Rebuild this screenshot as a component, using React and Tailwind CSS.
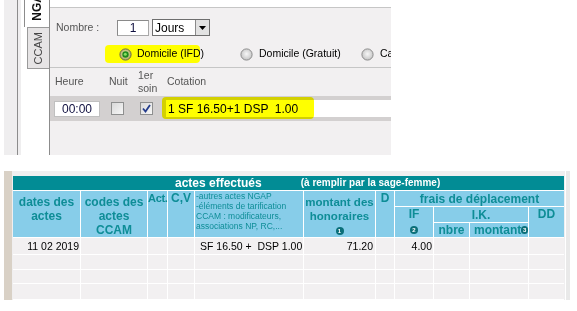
import React from "react";

function Radio({ checked, id }) {
  return (
    <svg width="13" height="13" viewBox="0 0 13 13" className="shrink-0 relative">
      <defs>
        <radialGradient id={id} cx="50%" cy="45%" r="55%">
          <stop offset="0%" stopColor={checked ? "#f0f0b0" : "#f7f7f7"} />
          <stop offset="100%" stopColor={checked ? "#a8a860" : "#c4c4c4"} />
        </radialGradient>
      </defs>
      <circle cx="6.5" cy="6.5" r="5.6" fill={`url(#${id})`} stroke={checked ? "#6b6b45" : "#8c8c8c"} strokeWidth="1" />
      {checked && (
        <>
          <circle cx="6.5" cy="6.5" r="3.2" fill="#1e8a1c" />
          <circle cx="6.3" cy="6.2" r="1.5" fill="#86e060" />
        </>
      )}
    </svg>
  );
}

function Check({ checked }) {
  return (
    <div className="w-[13px] h-[13px] border border-[#8e8f8f] bg-gradient-to-br from-[#d9d9d9] to-[#f7f7f7] flex items-center justify-center shrink-0">
      {checked && (
        <svg width="9" height="9" viewBox="0 0 9 9">
          <path d="M1 4.5 L3.5 7.5 L8 1" fill="none" stroke="#243c8c" strokeWidth="1.8" />
        </svg>
      )}
    </div>
  );
}

function Num({ n }) {
  return (
    <span className="inline-flex items-center justify-center w-[8px] h-[8px] rounded-full bg-[#0b6f79] text-white text-[6px] font-bold leading-none align-middle">
      {n}
    </span>
  );
}

function Top() {
  return (
    <div className="flex h-[155px] w-[391px] overflow-hidden">
      <div className="w-[4px] bg-white shrink-0" />
      <div className="w-[13px] bg-[#efeeef] shrink-0" />
      <div className="w-[1px] bg-[#8c8c8c] shrink-0" />
      <div className="w-[3px] bg-[#efeeef] shrink-0" />
      <div className="w-[3px] bg-white shrink-0" />
      <div className="w-[25px] flex flex-col bg-white shrink-0">
        <div className="h-[27px] border-l border-[#8c8c8c] bg-white overflow-hidden relative shrink-0">
          <span className="absolute left-[5px] bottom-[6px] [writing-mode:vertical-rl] rotate-180 font-bold text-[12px] leading-[14px] whitespace-nowrap text-[#111]">NGAP</span>
        </div>
        <div className="ml-[3px] h-[42px] border-l border-t border-b border-[#9a9a9a] bg-[#e6e4e5] flex items-center justify-center">
          <span className="[writing-mode:vertical-rl] rotate-180 text-[11px] leading-none text-[#444]">CCAM</span>
        </div>
      </div>
      <div className="w-[1px] bg-[#8c8c8c] shrink-0" />
      <div className="flex-1 flex flex-col min-w-0">
        <div className="h-[7px] bg-white shrink-0" />
        <div className="h-[1px] bg-[#c6c6c6] shrink-0" />
        <div className="flex-1 bg-[#f2f0f1] flex flex-col">
          <div className="mt-[11px] h-[17px] flex items-center">
            <span className="w-[67px] pl-[6px] text-[10.5px] text-[#555] shrink-0">Nombre :</span>
            <div className="w-[32px] h-[16px] bg-white border border-[#a8a8a8] border-t-[#8a8a8a] border-l-[#8a8a8a] flex items-center justify-center text-[12px] text-[#101040] shrink-0">1</div>
            <div className="ml-[3px] w-[58px] h-[17px] bg-white border border-[#6e6e6e] flex items-center shrink-0">
              <span className="pl-[2px] text-[12px] flex-1 leading-none">Jours</span>
              <div className="w-[14px] h-[15px] bg-[#e2e2e2] border-l border-[#8a8a8a] flex items-center justify-center">
                <svg width="7" height="4" viewBox="0 0 7 4"><path d="M0 0 H7 L3.5 4 Z" fill="#000" /></svg>
              </div>
            </div>
          </div>
          <div className="mt-[9px] h-[18px] relative flex items-center">
            <div className="absolute left-[55px] top-0 w-[95px] h-[18px] bg-[#ffff00] rounded-[4px]" />
            <div className="ml-[69px] w-[121px] flex items-center gap-[5px] relative shrink-0">
              <Radio checked id="r1" />
              <span className="text-[10.5px] whitespace-nowrap">Domicile (IFD)</span>
            </div>
            <div className="w-[121px] flex items-center gap-[6px] relative shrink-0">
              <Radio id="r2" />
              <span className="text-[10.5px] whitespace-nowrap">Domicile (Gratuit)</span>
            </div>
            <div className="flex items-center gap-[6px] relative shrink-0">
              <Radio id="r3" />
              <span className="text-[10.5px] whitespace-nowrap">Cabinet</span>
            </div>
          </div>
          <div className="mt-[4px] h-[1px] bg-[#c6c6c6]" />
          <div className="h-[28px] flex items-center text-[10.5px] text-[#555]">
            <span className="w-[59px] pl-[5px] shrink-0">Heure</span>
            <span className="w-[29px] shrink-0">Nuit</span>
            <span className="w-[29px] leading-[13px] shrink-0">1er<br />soin</span>
            <span>Cotation</span>
          </div>
          <div className="h-[25px] bg-[#d3d0d0] flex items-center relative">
            <div className="ml-[4px] w-[46px] h-[16px] bg-white border border-[#c0c0c0] flex items-center justify-center text-[12px] text-[#101040] shrink-0">00:00</div>
            <div className="ml-[11px]"><Check /></div>
            <div className="ml-[16px]"><Check checked /></div>
            <div className="ml-[13px] flex-1 h-[17px] bg-white flex items-center pl-[2px] text-[12px] whitespace-pre">1 SF 16.50+1 DSP  1.00</div>
            <div className="absolute left-[112px] top-[1px] w-[152px] h-[22px] bg-[#ffff00] rounded-[4px] mix-blend-multiply pointer-events-none" />
          </div>
        </div>
      </div>
    </div>
  );
}

const H = "bg-[#87cde9] text-[#0e8d97] font-bold";

function Bottom() {
  const rows = [
    ["11 02 2019", "", "", "", "SF 16.50 +  DSP 1.00", "71.20", "", "4.00", "", "", ""],
    ["", "", "", "", "", "", "", "", "", "", ""],
    ["", "", "", "", "", "", "", "", "", "", ""],
    ["", "", "", "", "", "", "", "", "", "", ""],
    ["", "", "", "", "", "", "", "", "", "", ""],
  ];
  const align = ["justify-end pr-[1px]", "", "", "", "pl-[5px]", "justify-end pr-[2px]", "", "justify-end pr-[1px]", "", "", ""];
  return (
    <div className="flex h-[129px] w-[566px] ml-[4px]">
      <div className="w-[8px] bg-[#d9d1c6]" />
      <div className="w-[553px] bg-[#f0eff0] pt-[5px] pl-[1px] overflow-hidden">
        <div className="grid grid-cols-[67px_66px_19px_26px_108px_71px_18px_38px_35px_58px_35px] grid-rows-[14px_15px_15px_14px_16px_14px_13px_15px_15px] gap-px bg-white w-[551px]">
          <div className="col-span-11 bg-[#028c95] text-white font-bold flex items-center pl-[162px]">
            <span className="text-[12px] leading-none">actes effectués</span>
            <span className="ml-[39px] text-[10px] leading-none">(à remplir par la sage-femme)</span>
          </div>
          <div className={`${H} row-span-3 text-[12px] leading-[14px] text-center pt-[4px]`}>dates des<br />actes</div>
          <div className={`${H} row-span-3 text-[12px] leading-[14px] text-center pt-[4px]`}>codes des<br />actes<br />CCAM</div>
          <div className={`${H} row-span-3 text-[11px] leading-[13px] tracking-[-0.3px] whitespace-nowrap pt-[1px]`}>Act.</div>
          <div className={`${H} row-span-3 text-[12px] leading-[13px] text-center pt-[1px]`}>C,V</div>
          <div className="bg-[#87cde9] text-[#0e8d97] row-span-3 text-[8.5px] leading-[10px] pl-[1px] whitespace-nowrap overflow-hidden">
            -autres actes NGAP<br />-éléments de tarification<br />CCAM : modificateurs,<br />associations NP, RC,...
          </div>
          <div className={`${H} row-span-3 text-[11.5px] leading-[14px] text-center pt-[4px]`}>
            montant des<br />honoraires<br /><Num n="1" />
          </div>
          <div className={`${H} row-span-3 text-[12px] leading-[13px] text-center pt-[1px]`}>D</div>
          <div className={`${H} col-span-4 text-[12px] flex items-center justify-center leading-none`}>frais de déplacement</div>
          <div className={`${H} row-span-2 text-[12px] leading-[15px] text-center`}>IF<br /><Num n="2" /></div>
          <div className={`${H} col-span-2 text-[12px] flex items-center justify-center leading-none`}>I.K.</div>
          <div className={`${H} row-span-2 text-[12px] leading-[15px] text-center`}>DD</div>
          <div className={`${H} text-[12px] flex items-center justify-center leading-none`}>nbre</div>
          <div className={`${H} text-[12px] flex items-center pl-[4px] leading-none whitespace-nowrap`}>montant<Num n="3" /></div>
          {rows.map((r, i) =>
            r.map((c, j) => (
              <div key={`${i}-${j}`} className={`bg-[#f2f0f1] text-[10.5px] leading-none flex items-center whitespace-pre ${align[j]}`}>
                {c}
              </div>
            ))
          )}
        </div>
      </div>
      <div className="w-[5px] bg-[#e9e9e9] border-l border-white" />
    </div>
  );
}

export default function App() {
  return (
    <div className="w-[577px] h-[311px] bg-white overflow-hidden font-['Liberation_Sans',Arial,sans-serif] text-black">
      <Top />
      <div className="h-[16px]" />
      <Bottom />
    </div>
  );
}
